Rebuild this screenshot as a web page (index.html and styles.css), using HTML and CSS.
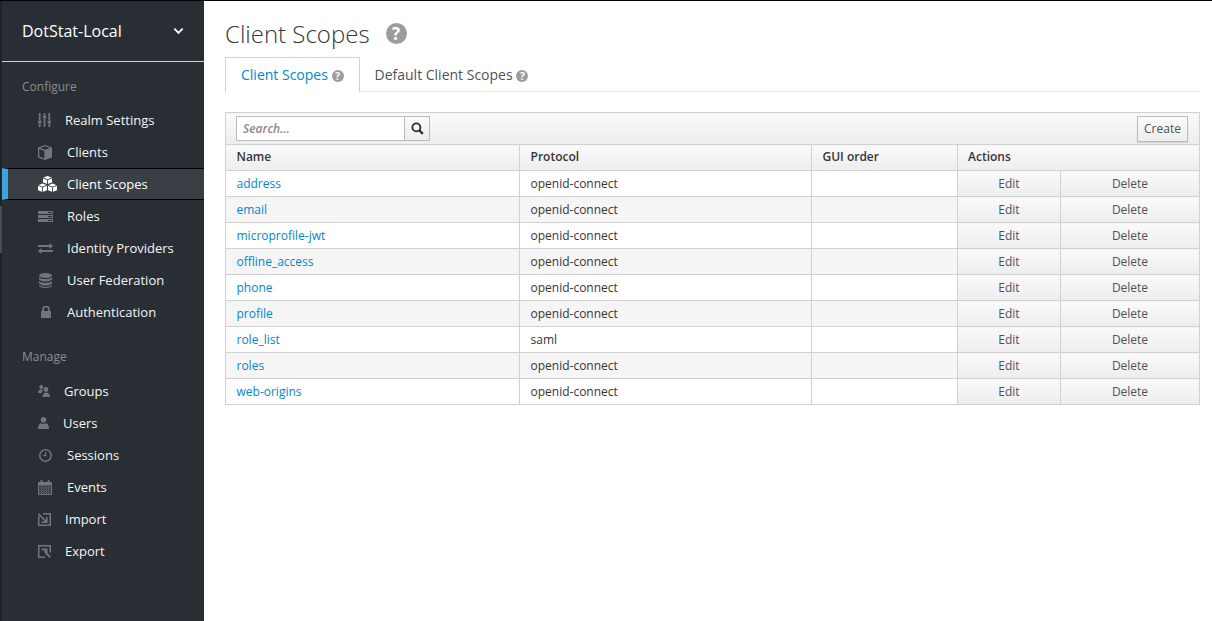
FILE: index.html
```html
<!DOCTYPE html>
<html lang="en">
<head>
  <meta charset="UTF-8">
  <title>Client Scopes</title>
  <link rel="stylesheet" href="styles.css">
</head>
<body>
  <div class="page">
    <aside class="sidebar">
      <div class="scrollbar"></div>
      <div class="realm">
        <span>DotStat-Local</span>
        <svg class="chevron" viewBox="0 0 12 8"><path d="M1.5 1.500 6 6l4.500-4.500" fill="none" stroke="#fff" stroke-width="2"/></svg>
      </div>
      <h2 class="nav-title">Configure</h2>
      <ul class="nav">
        <li class="slot-27">
          <span class="slot"><svg class="icon i-13-14" viewBox="0 0 13 14"><path d="M.8 0h1.800v7H.8zM.8 11h1.800v3H.8zM5.600 0h1.800v2H5.600zM5.600 6h1.800v8H5.600zM10.400 0h1.800v7h-1.800zM10.400 11h1.800v3h-1.800z"/><path d="M0 7.500h3.400v3H0zM4.800 2.500h3.400v3H4.800zM9.600 7.500H13v3H9.600z"/></svg></span>
          Realm Settings
        </li>
        <li class="slot-29">
          <span class="slot"><svg class="icon i-14-15" viewBox="0 0 14 15"><path d="M7 0 14 2.600v9.800L7 15 0 12.400V2.600zM7 1.300 2.300 3 7 4.700 11.700 3zM1.300 4v7.500l5 1.900V5.900z"/></svg></span>
          Clients
        </li>
        <li class="slot-29 active">
          <span class="slot"><svg class="icon i-19-16" viewBox="0 0 19 16"><path fill="#fff" d="M9.500 0 14 1.700v4.700L9.500 8 5 6.400V1.700zM4.500 7.500 9 9.200v5L4.500 16 0 14.200v-5zM14.500 7.500 19 9.200v5L14.500 16 10 14.200v-5z"/><path fill="none" stroke="#393f44" stroke-width=".9" d="M5 2 9.500 3.700 14 2M9.500 3.700V8M0 9.400 4.500 11 9 9.400M4.500 11v5M10 9.400 14.500 11 19 9.400M14.500 11v5"/></svg></span>
          Client Scopes
        </li>
        <li class="slot-29">
          <span class="slot"><svg class="icon i-15-11" viewBox="0 0 15 11"><path d="M0 0h15v3.100H0zM0 4h15v3.100H0zM0 8h15v3H0z"/><path d="M10 1h4v1h-4zM10 5h4v1h-4zM10 9h4v1h-4z" fill="#292e34"/></svg></span>
          Roles
        </li>
        <li class="slot-29">
          <span class="slot"><svg class="icon i-15-11" viewBox="0 0 15 11"><path d="M0 2h11.500V0L15 3l-3.500 3V4H0zM15 7H3.500V5L0 8l3.500 3V9H15z"/></svg></span>
          Identity Providers
        </li>
        <li class="slot-29">
          <span class="slot"><svg class="icon i-13-15 shift-1" viewBox="0 0 13 15"><ellipse cx="6.500" cy="2.500" rx="6.500" ry="2.500"/><path d="M0 3.900c1 1.500 3.500 2.200 6.500 2.200s5.500-.7 6.500-2.200v2.400C12 7.800 9.500 8.600 6.500 8.600S1 7.800 0 6.300zM0 7.800c1 1.500 3.500 2.200 6.500 2.200s5.500-.7 6.500-2.200v2.400c-1 1.500-3.500 2.300-6.500 2.300S1 11.700 0 10.200zM0 11.800c1 1.400 3.500 2.100 6.500 2.100s5.500-.7 6.500-2.100v.7c0 1.500-3 2.500-6.500 2.500S0 14 0 12.500z"/></svg></span>
          User Federation
        </li>
        <li class="slot-29">
          <span class="slot"><svg class="icon i-10-12 shift-3" viewBox="0 0 10 12"><path d="M0 5h1.300V3.300a3.700 3.700 0 0 1 7.400 0V5H10v7H0zM3 5h4V3.300a2 2 0 0 0-4 0z"/></svg></span>
          Authentication
        </li>
      </ul>
      <h2 class="nav-title nav-title-manage">Manage</h2>
      <ul class="nav nav-manage">
        <li class="slot-26">
          <span class="slot"><svg class="icon i-12-12" viewBox="0 0 12 12"><circle cx="3.300" cy="2" r="2"/><path d="M0 8c0-2.500 1-3.500 3.300-3.500.8 0 1.300.2 1.700.5C4.200 6 3.800 7 3.800 8z"/><circle cx="8" cy="4.500" r="2.400"/><path d="M4.500 12c0-3 1.300-4.500 3.500-4.500S12 9 12 12z"/></svg></span>
          Groups
        </li>
        <li class="slot-25">
          <span class="slot"><svg class="icon i-11-12" viewBox="0 0 11 12"><circle cx="5.500" cy="2.800" r="2.800"/><path d="M0 12c0-4 1.800-5.700 3.200-5.700 1.400.7 3.200.7 4.600 0C9.200 6.300 11 8 11 12z"/></svg></span>
          Users
        </li>
        <li class="slot-29">
          <span class="slot"><svg class="icon i-13-13 shift-1" viewBox="0 0 13 13"><circle cx="6.500" cy="6.500" r="5.700" fill="none" stroke="#72767b" stroke-width="1.600"/><path d="M6 3h1.300v4.300H4V6.100h2z"/></svg></span>
          Sessions
        </li>
        <li class="slot-29">
          <span class="slot"><svg class="icon i-14-15" viewBox="0 0 14 15"><path d="M0 2h2.500V1a1 1 0 0 1 2 0v1h5V1a1 1 0 0 1 2 0v1H14v13H0zM1 5.500V14h12V5.500z"/><path d="M3 5.500V14h.8V5.500zM5.400 5.500V14h.8V5.500zM7.800 5.500V14h.8V5.500zM10.200 5.500V14h.8V5.500zM1 7.500h12v.8H1zM1 9.800h12v.8H1zM1 12h12v.8H1z"/></svg></span>
          Events
        </li>
        <li class="slot-27">
          <span class="slot"><svg class="icon i-13-13" viewBox="0 0 13 13"><path d="M0 3h1.500v8.500h10v-10H5V0h8v13H0z"/><path d="M.8 0 8 7.200V4h1.600v6H3.600V8.400h3.200L0 1.500z"/></svg></span>
          Import
        </li>
        <li class="slot-27">
          <span class="slot"><svg class="icon i-13-13" viewBox="0 0 13 13"><path d="M0 0h13v7.500h-1.500v-6h-10v10H7V13H0z"/><path d="M3.500 3.600h6v6H8V6.400L12.800 11.500 11.500 13 6.500 7.800 6.400 5.200H3.500z"/></svg></span>
          Export
        </li>
      </ul>
    </aside>

    <main class="content">
      <h1 class="page-title">Client Scopes <span class="help help-big">?</span></h1>
      <div class="tabs">
        <a class="tab tab-active">Client Scopes <span class="help">?</span></a>
        <a class="tab">Default Client Scopes <span class="help">?</span></a>
      </div>

      <table class="scopes">
        <colgroup>
          <col class="col-name"><col class="col-protocol"><col class="col-gui"><col class="col-edit"><col>
        </colgroup>
        <thead>
          <tr class="toolbar">
            <th colspan="5">
              <div class="toolbar-inner">
                <div class="search">
                  <input type="text" placeholder="Search...">
                  <button class="search-btn">
                    <svg viewBox="0 0 14 14"><circle cx="5.800" cy="5.800" r="4.300" fill="none" stroke="#292e34" stroke-width="2"/><path d="m9 9 3.800 3.800" stroke="#292e34" stroke-width="2.400"/></svg>
                  </button>
                </div>
                <button class="create">Create</button>
              </div>
            </th>
          </tr>
          <tr class="head">
            <th>Name</th><th>Protocol</th><th>GUI order</th><th class="actions-head" colspan="2">Actions</th>
          </tr>
        </thead>
        <tbody>
          <tr><td><a>address</a></td><td>openid-connect</td><td></td><td class="action">Edit</td><td class="action">Delete</td></tr>
          <tr><td><a>email</a></td><td>openid-connect</td><td></td><td class="action">Edit</td><td class="action">Delete</td></tr>
          <tr><td><a>microprofile-jwt</a></td><td>openid-connect</td><td></td><td class="action">Edit</td><td class="action">Delete</td></tr>
          <tr><td><a>offline_access</a></td><td>openid-connect</td><td></td><td class="action">Edit</td><td class="action">Delete</td></tr>
          <tr><td><a>phone</a></td><td>openid-connect</td><td></td><td class="action">Edit</td><td class="action">Delete</td></tr>
          <tr><td><a>profile</a></td><td>openid-connect</td><td></td><td class="action">Edit</td><td class="action">Delete</td></tr>
          <tr><td><a>role_list</a></td><td>saml</td><td></td><td class="action">Edit</td><td class="action">Delete</td></tr>
          <tr><td><a>roles</a></td><td>openid-connect</td><td></td><td class="action">Edit</td><td class="action">Delete</td></tr>
          <tr><td><a>web-origins</a></td><td>openid-connect</td><td></td><td class="action">Edit</td><td class="action">Delete</td></tr>
        </tbody>
      </table>
    </main>
  </div>
</body>
</html>
```

FILE: styles.css
```css
html, body {
  margin: 0;
  height: 100%;
  overflow: hidden;
}
body {
  font-family: 'Open Sans', sans-serif;
  font-size: 12px;
  color: #363636;
  background-color: #fff;
}
.page {
  display: flex;
  height: 100%;
  border-top: 1px solid #030303;
  box-sizing: border-box;
}
.sidebar {
  position: relative;
  width: 202px;
  flex: none;
  background-color: #292e34;
  border-left: 2px solid #1f2328;
  color: #fff;
}
.scrollbar {
  position: absolute;
  left: -2px;
  top: 205px;
  width: 2px;
  height: 47px;
  background-color: #4b4b4b;
}
.realm {
  display: flex;
  align-items: center;
  justify-content: space-between;
  height: 61px;
  padding: 0 20px;
  border-bottom: 1px solid #d1d1d1;
  font-size: 16px;
  box-sizing: border-box;
  color: #fff;
}
.chevron {
  width: 11px;
  height: 8px;
}
.nav-title {
  margin: 16px 0 0 20px;
  font-size: 12px;
  line-height: 17px;
  font-weight: 400;
  color: #8b8d8f;
}
.nav-title-manage {
  margin-top: 20px;
}
.nav {
  list-style: none;
  margin: 9px 0 0;
  padding: 0;
}
.nav-manage {
  margin-top: 10px;
}
.nav li {
  display: flex;
  align-items: center;
  height: 32px;
  padding-left: 36px;
  font-size: 13px;
  color: #f5f5f5;
  box-sizing: border-box;
}
.nav li.active {
  background-color: #393f44;
  border-left: 6px solid #39a5dc;
  padding-left: 30px;
  border-top: 1px solid #030303;
  border-bottom: 1px solid #030303;
  color: #fff;
}
.slot {
  display: flex;
  align-items: center;
  flex: none;
}
.slot-25 .slot { width: 25px; }
.slot-26 .slot { width: 26px; }
.slot-27 .slot { width: 27px; }
.slot-29 .slot { width: 29px; }
.icon {
  flex: none;
  fill: #72767b;
}
.shift-1 { margin-left: 1px; }
.shift-3 { margin-left: 3px; }
.i-10-12 { width: 10px; height: 12px; }
.i-11-12 { width: 11px; height: 12px; }
.i-12-12 { width: 12px; height: 12px; }
.i-13-13 { width: 13px; height: 13px; }
.i-13-14 { width: 13px; height: 14px; }
.i-13-15 { width: 13px; height: 15px; }
.i-14-15 { width: 14px; height: 15px; }
.i-15-11 { width: 15px; height: 11px; }
.i-19-16 { width: 19px; height: 16px; }

.content {
  flex: 1;
  padding: 0 12px 0 21px;
  min-width: 0;
}
.page-title {
  display: flex;
  align-items: center;
  height: 33px;
  margin: 16px 0 0;
  font-size: 24px;
  line-height: 33px;
  font-weight: 300;
  color: #363636;
}
.help {
  display: inline-block;
  width: 12px;
  height: 12px;
  border-radius: 50%;
  background-color: #9c9c9c;
  color: #fff;
  font-size: 10px;
  line-height: 12px;
  font-weight: 700;
  text-align: center;
  vertical-align: 0;
}
.help-big {
  width: 21px;
  height: 21px;
  margin-left: 16px;
  font-size: 17px;
  line-height: 21px;
}
.tabs {
  display: flex;
  margin-top: 7px;
  border-bottom: 1px solid #ededed;
  height: 34px;
}
.tab {
  padding: 0 15px;
  font-size: 14px;
  line-height: 35px;
  color: #4d5258;
}
.tab-active {
  color: #0088ce;
  background-color: #fff;
  border: 1px solid #d1d1d1;
  border-bottom: 1px solid #fff;
  height: 34px;
  line-height: 34px;
}
.scopes {
  width: 975px;
  margin-top: 20px;
  border-collapse: collapse;
  table-layout: fixed;
  border: 1px solid #d1d1d1;
}
.col-name { width: 294px; }
.col-protocol { width: 292px; }
.col-gui { width: 146px; }
.col-edit { width: 103px; }
.scopes th, .scopes td {
  border: 1px solid #d1d1d1;
  padding: 0 10px 0 10.5px;
  box-sizing: border-box;
  text-align: left;
}
.scopes td a {
  color: #0088ce;
}
.scopes tbody tr:nth-child(even) td {
  background-color: #f5f5f5;
}
.scopes .toolbar th {
  height: 32px;
  padding: 0 10px;
  background: linear-gradient(#fafafa, #ededed);
  font-weight: 400;
}
.toolbar-inner {
  display: flex;
  justify-content: space-between;
  align-items: center;
  margin-right: 1px;
}
.search {
  display: flex;
}
.search input {
  width: 168px;
  height: 25px;
  padding: 0 6px;
  border: 1px solid #bbb;
  border-right: 0;
  box-sizing: border-box;
  font-family: inherit;
  font-size: 12px;
  font-style: italic;
}
.search input::placeholder {
  color: #8a8a8a;
  font-weight: 600;
}
.search-btn {
  display: flex;
  align-items: center;
  justify-content: center;
  width: 26px;
  height: 25px;
  padding: 0;
  background: linear-gradient(#fafafa, #ededed);
  border: 1px solid #bbb;
}
.search-btn svg {
  width: 13px;
  height: 13px;
}
.create {
  height: 26px;
  width: 51px;
  padding: 0;
  font-family: inherit;
  font-size: 12px;
  color: #4d5258;
  background: linear-gradient(#fafafa, #ededed);
  border: 1px solid #bbb;
  box-shadow: 0 1px 1px rgba(3, 3, 3, 0.1);
}
.scopes .head th {
  height: 26px;
  padding-bottom: 2px;
  background: linear-gradient(#fafafa, #ededed);
  font-weight: 600;
  color: #363636;
}
.scopes .head .actions-head {
  padding-left: 10px;
}
.scopes td.action {
  padding: 0 10px;
  text-align: center;
  background: linear-gradient(#fafafa, #ededed);
  color: #4d5258;
}
.scopes tbody td {
  height: 26px;
}
```
